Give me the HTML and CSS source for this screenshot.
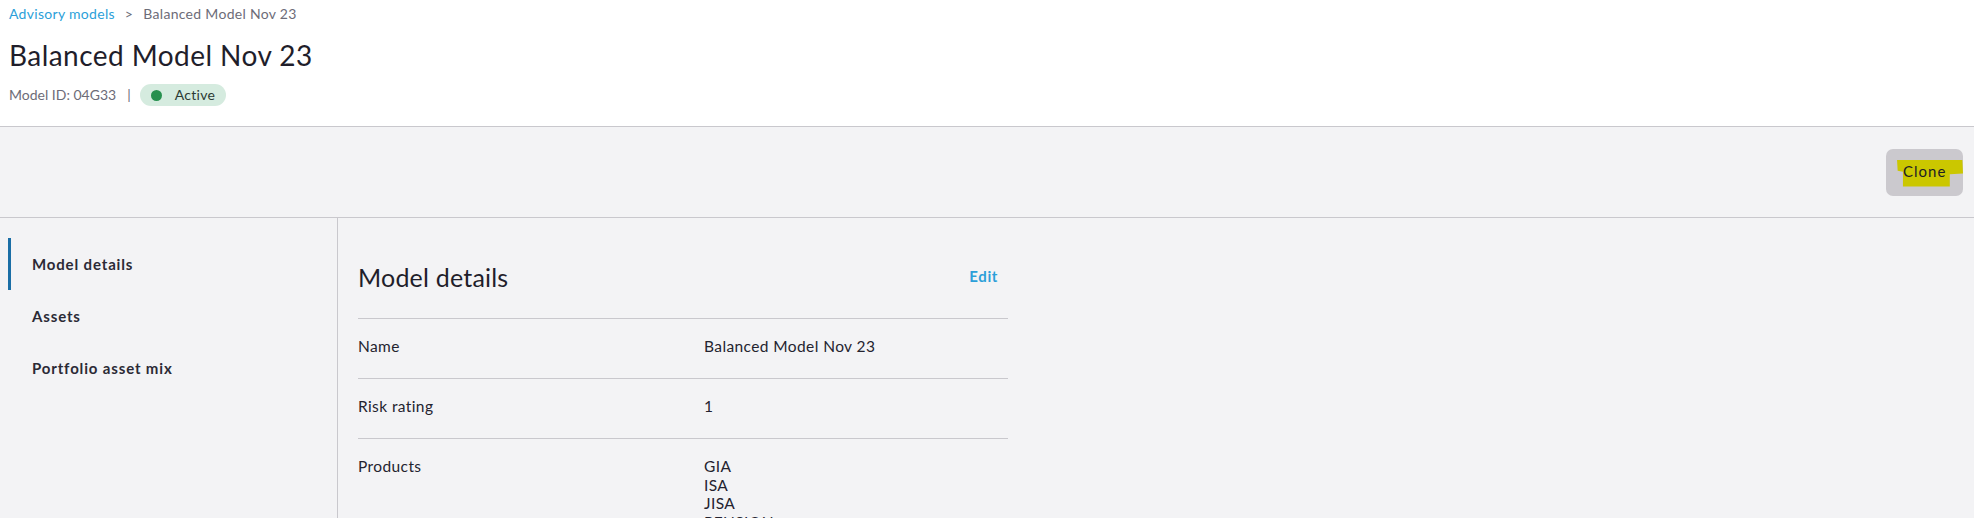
FILE: index.html
```html
<!DOCTYPE html>
<html lang="en">
<head>
<meta charset="utf-8">
<title>Balanced Model Nov 23</title>
<link rel="stylesheet" href="styles.css">
</head>
<body>
<header class="page-header">
  <nav class="breadcrumb">
    <a class="crumb-link" href="#">Advisory models</a>
    <span class="crumb-sep">&gt;</span>
    <span class="crumb-current">Balanced Model Nov 23</span>
  </nav>
  <h1 class="page-title">Balanced Model Nov 23</h1>
  <div class="meta">
    <span class="model-id">Model ID: 04G33</span>
    <span class="meta-sep">|</span>
    <span class="status-badge"><span class="status-dot"></span>Active</span>
  </div>
</header>
<div class="toolbar">
  <button class="clone-btn"><span class="highlight"></span><span class="clone-label">Clone</span></button>
</div>
<div class="main">
  <aside class="sidebar">
    <a class="nav-item active" href="#">Model details</a>
    <a class="nav-item" href="#">Assets</a>
    <a class="nav-item" href="#">Portfolio asset mix</a>
  </aside>
  <section class="content">
    <div class="panel">
      <div class="panel-head">
        <h2 class="panel-title">Model details</h2>
        <a class="edit-link" href="#">Edit</a>
      </div>
      <div class="row">
        <div class="row-label">Name</div>
        <div class="row-value">Balanced Model Nov 23</div>
      </div>
      <div class="row">
        <div class="row-label">Risk rating</div>
        <div class="row-value">1</div>
      </div>
      <div class="row">
        <div class="row-label">Products</div>
        <div class="row-value list">
          <span>GIA</span>
          <span>ISA</span>
          <span>JISA</span>
          <span>PENSION</span>
        </div>
      </div>
    </div>
  </section>
</div>
</body>
</html>
```

FILE: styles.css
```css
* { box-sizing: border-box; }

html, body {
  margin: 0;
  padding: 0;
  height: 518px;
  overflow: hidden;
}

body {
  font-family: Lato, "Liberation Sans", sans-serif;
  color: #24232f;
  background: #f3f3f5;
}

.page-header {
  background: #ffffff;
  height: 127px;
  padding: 4px 9px 0;
  border-bottom: 1px solid #c9c8cd;
}

.breadcrumb {
  display: flex;
  align-items: center;
  font-size: 14px;
  line-height: 20px;
  gap: 10px;
  letter-spacing: 0.3px;
}

.crumb-link {
  color: #2c9fd9;
  text-decoration: none;
}

.crumb-sep, .crumb-current {
  color: #6d6c78;
}

.page-title {
  margin: 13px 0 0;
  font-size: 28px;
  line-height: 36px;
  font-weight: 400;
  color: #1f1e2b;
  letter-spacing: 0.45px;
}

.meta {
  margin-top: 11px;
  display: flex;
  align-items: center;
  font-size: 14px;
  line-height: 22px;
  color: #6d6c78;
}

.meta-sep {
  margin: 0 9px 0 11px;
}

.status-badge {
  display: inline-flex;
  align-items: center;
  height: 22px;
  padding: 0 11px 0 11px;
  border-radius: 11px;
  background: #d5ebdf;
  color: #2c3a34;
  letter-spacing: 0.3px;
}

.status-dot {
  width: 11px;
  height: 11px;
  border-radius: 50%;
  background: #27904f;
  margin-right: 13px;
}

.toolbar {
  height: 91px;
  display: flex;
  justify-content: flex-end;
  align-items: center;
  padding-right: 11px;
  border-bottom: 1px solid #c9c8cd;
}

.clone-btn {
  position: relative;
  width: 77px;
  height: 47px;
  border: none;
  border-radius: 7px;
  background: #cbc9ce;
  font-family: inherit;
  font-size: 15px;
  color: #1d1c25;
  padding: 0 0 2px 17px;
  text-align: left;
}

.highlight {
  position: absolute;
  left: 11px;
  top: 11px;
  width: 66px;
  height: 27px;
  background: #cbc700;
  clip-path: polygon(0 0, 99% 0, 100% 52%, 80% 55%, 80% 100%, 9% 100%, 9% 45%, 1% 42%);
}

.clone-label {
  position: relative;
  letter-spacing: 1px;
}

.main {
  display: flex;
  height: 300px;
}

.sidebar {
  width: 338px;
  flex: none;
  border-right: 1px solid #c9c8cd;
  padding: 20px 0 0 8px;
  display: flex;
  flex-direction: column;
}

.nav-item {
  display: flex;
  align-items: center;
  height: 52px;
  padding-left: 21px;
  border-left: 3px solid transparent;
  font-size: 15px;
  font-weight: 700;
  color: #2b2a35;
  text-decoration: none;
  letter-spacing: 0.85px;
}

.nav-item.active {
  border-left-color: #1a6ea6;
}

.content {
  flex: 1;
  padding: 41px 0 0 20px;
}

.panel {
  width: 650px;
}

.panel-head {
  display: flex;
  justify-content: space-between;
  align-items: center;
  padding-bottom: 23px;
}

.panel-title {
  margin: 0;
  font-size: 25px;
  line-height: 36px;
  font-weight: 400;
  color: #1f1e2b;
  letter-spacing: 0.2px;
}

.edit-link {
  margin-right: 10px;
  margin-bottom: 3px;
  font-size: 15px;
  line-height: 20px;
  font-weight: 700;
  color: #2c9fd9;
  text-decoration: none;
  letter-spacing: 0.6px;
}

.row {
  display: grid;
  grid-template-columns: 346px 1fr;
  border-top: 1px solid #c9c8cd;
  padding: 18px 0 22px;
  font-size: 15.5px;
  line-height: 19px;
  color: #24232f;
  letter-spacing: 0.4px;
}

.row-value.list {
  display: flex;
  flex-direction: column;
  line-height: 18.5px;
}
```
